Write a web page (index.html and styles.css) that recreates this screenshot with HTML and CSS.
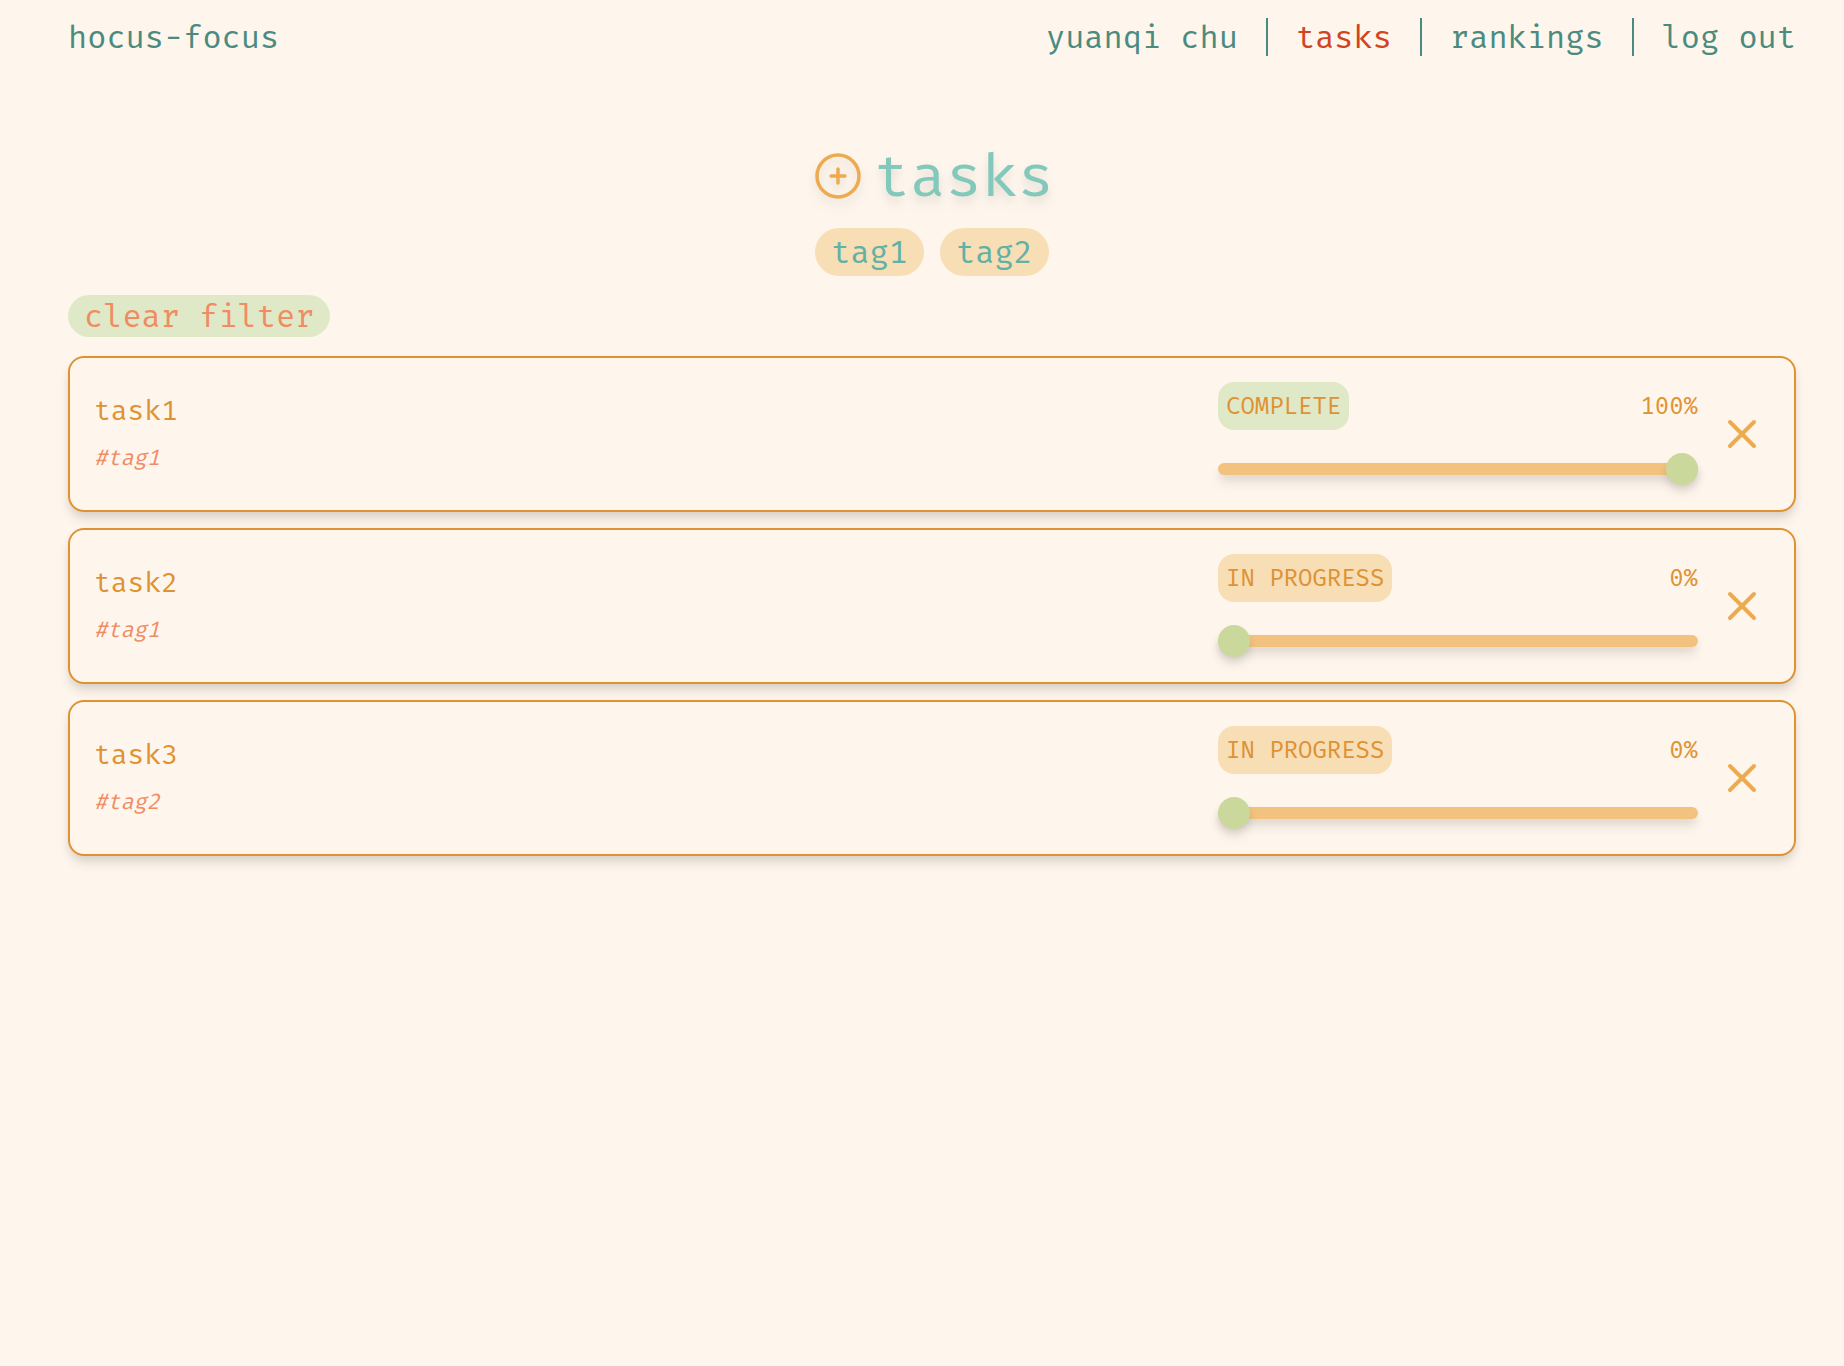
FILE: index.html
```html
<!DOCTYPE html>
<html lang="en">
<head>
<meta charset="utf-8">
<meta name="viewport" content="width=device-width, initial-scale=1">
<title>hocus-focus</title>
<link rel="stylesheet" href="styles.css">
</head>
<body>
<header class="site-header">
  <a class="brand" href="#">hocus-focus</a>
  <nav class="site-nav">
    <a href="#">yuanqi chu</a>
    <a class="current" href="#" aria-current="page"><span>tasks</span></a>
    <a href="#">rankings</a>
    <a href="#">log out</a>
  </nav>
</header>
<main class="page">
  <div class="title-row">
    <button class="icon-button" type="button" aria-label="Add task">
      <svg class="icon-add" viewBox="0 0 24 24" aria-hidden="true"><path d="M12 9v6m3-3H9m12 0a9 9 0 1 1-18 0 9 9 0 0 1 18 0z"/></svg>
    </button>
    <h1>tasks</h1>
  </div>
  <div class="tags">
    <button class="tag" type="button">tag1</button>
    <button class="tag" type="button">tag2</button>
  </div>
  <button class="clear" type="button">clear filter</button>
  <ul class="task-list">
    <li class="card">
      <div class="task">
        <h2>task1</h2>
        <p class="task-tag">#tag1</p>
      </div>
      <div class="progress">
        <div class="progress-head">
          <span class="status complete">COMPLETE</span>
          <label class="percent" for="p1">100%</label>
        </div>
        <input id="p1" class="slider" type="range" min="0" max="100" value="100">
      </div>
      <button class="icon-button" type="button" aria-label="Delete task1">
        <svg class="icon-close" viewBox="0 0 24 24" aria-hidden="true"><path d="M6 18L18 6M6 6l12 12"/></svg>
      </button>
    </li>
    <li class="card">
      <div class="task">
        <h2>task2</h2>
        <p class="task-tag">#tag1</p>
      </div>
      <div class="progress">
        <div class="progress-head">
          <span class="status">IN PROGRESS</span>
          <label class="percent" for="p2">0%</label>
        </div>
        <input id="p2" class="slider" type="range" min="0" max="100" value="0">
      </div>
      <button class="icon-button" type="button" aria-label="Delete task2">
        <svg class="icon-close" viewBox="0 0 24 24" aria-hidden="true"><path d="M6 18L18 6M6 6l12 12"/></svg>
      </button>
    </li>
    <li class="card">
      <div class="task">
        <h2>task3</h2>
        <p class="task-tag">#tag2</p>
      </div>
      <div class="progress">
        <div class="progress-head">
          <span class="status">IN PROGRESS</span>
          <label class="percent" for="p3">0%</label>
        </div>
        <input id="p3" class="slider" type="range" min="0" max="100" value="0">
      </div>
      <button class="icon-button" type="button" aria-label="Delete task3">
        <svg class="icon-close" viewBox="0 0 24 24" aria-hidden="true"><path d="M6 18L18 6M6 6l12 12"/></svg>
      </button>
    </li>
  </ul>
</main>
</body>
</html>
```
FILE: styles.css
```css
:root {
  --paper: #fef6ec;
  --orange: #df9234;
  --icon: #edab50;
  --sand: #f7deb5;
  --leaf: #e0e9c7;
  --coral: #f08c64;
  --pine: #4b8b7f;
  --shadow: 0 8px 12px -1px rgba(0, 0, 0, .1), 0 4px 8px -2px rgba(0, 0, 0, .08);
}

* { box-sizing: border-box; }

body {
  margin: 0;
  background: var(--paper);
  color: var(--pine);
  font: 32px/48px "Fira Mono", "Liberation Mono", monospace;
}

h1, h2, p, ul { margin: 0; padding: 0; font-weight: 400; }

a { color: inherit; text-decoration: none; }

button {
  border: 0;
  padding: 0;
  background: none;
  font: inherit;
  cursor: pointer;
}

svg {
  display: block;
  fill: none;
  stroke: var(--icon);
  stroke-linecap: round;
  stroke-linejoin: round;
}

.site-header {
  display: flex;
  justify-content: space-between;
  padding: 18px 48px;
  padding-left: 68px;
  line-height: 38px;
}

.site-nav { display: flex; }

.site-nav a + a {
  margin-left: 28px;
  padding-left: 28px;
  border-left: 2px solid var(--pine);
}

.current span { color: #d2441f; }

.page { padding: 58px 48px 48px 68px; }

.title-row {
  display: flex;
  justify-content: center;
  align-items: center;
  gap: 8px;
  filter: drop-shadow(0 8px 6px rgba(0, 0, 0, .07)) drop-shadow(0 4px 4px rgba(0, 0, 0, .06));
}

.title-row h1 {
  color: #82c9bc;
  font-size: 60px;
  line-height: 88px;
}

.icon-add { width: 56px; height: 56px; stroke-width: 1.5; }
.icon-close { width: 48px; height: 48px; stroke-width: 2; }

.tags {
  display: flex;
  justify-content: center;
  gap: 16px;
  margin-top: 8px;
}

.tag {
  padding: 0 16px;
  border-radius: 24px;
  background: var(--sand);
  color: #62b1a5;
}

.clear {
  display: block;
  margin-top: 19px;
  padding: 0 16px;
  border-radius: 21px;
  background: var(--leaf);
  color: var(--coral);
  line-height: 42px;
}

.task-list {
  display: grid;
  gap: 16px;
  margin-top: 19px;
  list-style: none;
}

.card {
  display: flex;
  align-items: center;
  padding: 24px 28px 24px 24px;
  border: 2px solid var(--orange);
  border-radius: 16px;
  background: var(--paper);
  box-shadow: var(--shadow);
  gap: 20px;
}

.task { flex: 1; }

.task h2 {
  color: var(--orange);
  font-size: 28px;
  line-height: 48px;
}

.task-tag {
  color: var(--coral);
  font-size: 22px;
  font-style: italic;
  line-height: 46px;
}

.progress { width: 480px; }

.progress-head {
  display: flex;
  justify-content: space-between;
  color: var(--orange);
  font-size: 24px;
}

.status {
  padding: 0 8px;
  border-radius: 16px;
  background: var(--sand);
}

.status.complete { background: var(--leaf); }

.slider {
  appearance: none;
  display: block;
  width: 100%;
  height: 12px;
  margin: 33px 0 11px;
  border-radius: 6px;
  background: #f2c27e;
  box-shadow: var(--shadow);
}

.slider::-webkit-slider-thumb {
  appearance: none;
  width: 32px;
  height: 32px;
  border-radius: 50%;
  background: #cad99b;
  box-shadow: var(--shadow);
}
```
